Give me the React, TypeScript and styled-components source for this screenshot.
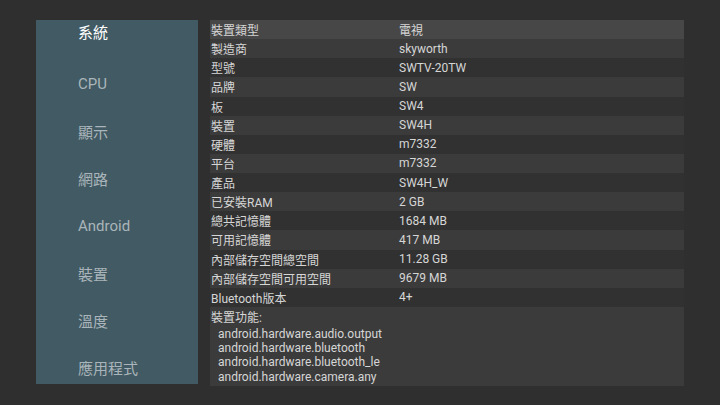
import React from 'react'
import styled, { createGlobalStyle } from 'styled-components'

const GlobalStyle = createGlobalStyle`
    html, body {
        margin: 0;
        padding: 0;
        background: #2f2f2f;
    }
    body {
        font-family: Roboto, "Noto Sans CJK TC", sans-serif;
    }
`

const Screen = styled.div`
    width: 720px;
    height: 405px;
    box-sizing: border-box;
    padding: 20px 36px 0 36px;

    display: flex;
    align-items: flex-start;
    gap: 12px;
`

const Sidebar = styled.div`
    width: 162px;
    height: 364px;
    background: #425a63;
    overflow: hidden;

    display: flex;
    flex-direction: column;
`

const MenuItem = styled.div<{ $active?: boolean }>`
    flex-shrink: 0;
    height: ${(p) => (p.$active ? '40.4px' : '47.3px')};
    padding-left: 42px;
    box-sizing: border-box;

    display: flex;
    align-items: ${(p) => (p.$active ? 'flex-start' : 'center')};
    padding-top: ${(p) => (p.$active ? '1px' : '0')};

    font-size: 15px;
    color: ${(p) => (p.$active ? '#ffffff' : '#a9b5ba')};
`

const Table = styled.div`
    width: 474px;
    display: flex;
    flex-direction: column;
`

const Row = styled.div<{ $tone: 'focus' | 'light' | 'dark' }>`
    height: 19.14px;
    display: flex;
    align-items: center;
    background: ${(p) =>
        p.$tone === 'focus' ? '#474747' : p.$tone === 'light' ? '#3b3b3b' : '#313131'};

    font-size: 12px;
    color: #d6d6d6;
`

const Label = styled.div`
    width: 189px;
    padding-left: 1px;
    box-sizing: border-box;
    white-space: nowrap;
`

const Value = styled.div`
    flex: 1;
    white-space: nowrap;
`

const Features = styled.div`
    background: #3b3b3b;
    padding: 2px 0 2px 1px;

    font-size: 12px;
    color: #d6d6d6;
`

const FeatureTitle = styled.div`
    height: 18px;
    line-height: 18px;
`

const FeatureLine = styled.div`
    padding-left: 7px;
    line-height: 14.3px;
`

const menu = ['系統', 'CPU', '顯示', '網路', 'Android', '裝置', '溫度', '應用程式']

const rows: [string, string][] = [
    ['裝置類型', '電視'],
    ['製造商', 'skyworth'],
    ['型號', 'SWTV-20TW'],
    ['品牌', 'SW'],
    ['板', 'SW4'],
    ['裝置', 'SW4H'],
    ['硬體', 'm7332'],
    ['平台', 'm7332'],
    ['產品', 'SW4H_W'],
    ['已安裝RAM', '2 GB'],
    ['總共記憶體', '1684 MB'],
    ['可用記憶體', '417 MB'],
    ['內部儲存空間總空間', '11.28 GB'],
    ['內部儲存空間可用空間', '9679 MB'],
    ['Bluetooth版本', '4+'],
]

const features = [
    'android.hardware.audio.output',
    'android.hardware.bluetooth',
    'android.hardware.bluetooth_le',
    'android.hardware.camera.any',
]

function App() {
    return (
        <>
            <GlobalStyle />
            <Screen>
                <Sidebar>
                    {menu.map((m, i) => (
                        <MenuItem key={m} $active={i === 0}>{m}</MenuItem>
                    ))}
                </Sidebar>
                <Table>
                    {rows.map(([k, v], i) => (
                        <Row key={k} $tone={i === 0 ? 'focus' : i % 2 === 1 ? 'light' : 'dark'}>
                            <Label>{k}</Label>
                            <Value>{v}</Value>
                        </Row>
                    ))}
                    <Features>
                        <FeatureTitle>裝置功能:</FeatureTitle>
                        {features.map((f) => (
                            <FeatureLine key={f}>{f}</FeatureLine>
                        ))}
                    </Features>
                </Table>
            </Screen>
        </>
    )
}

export default App
